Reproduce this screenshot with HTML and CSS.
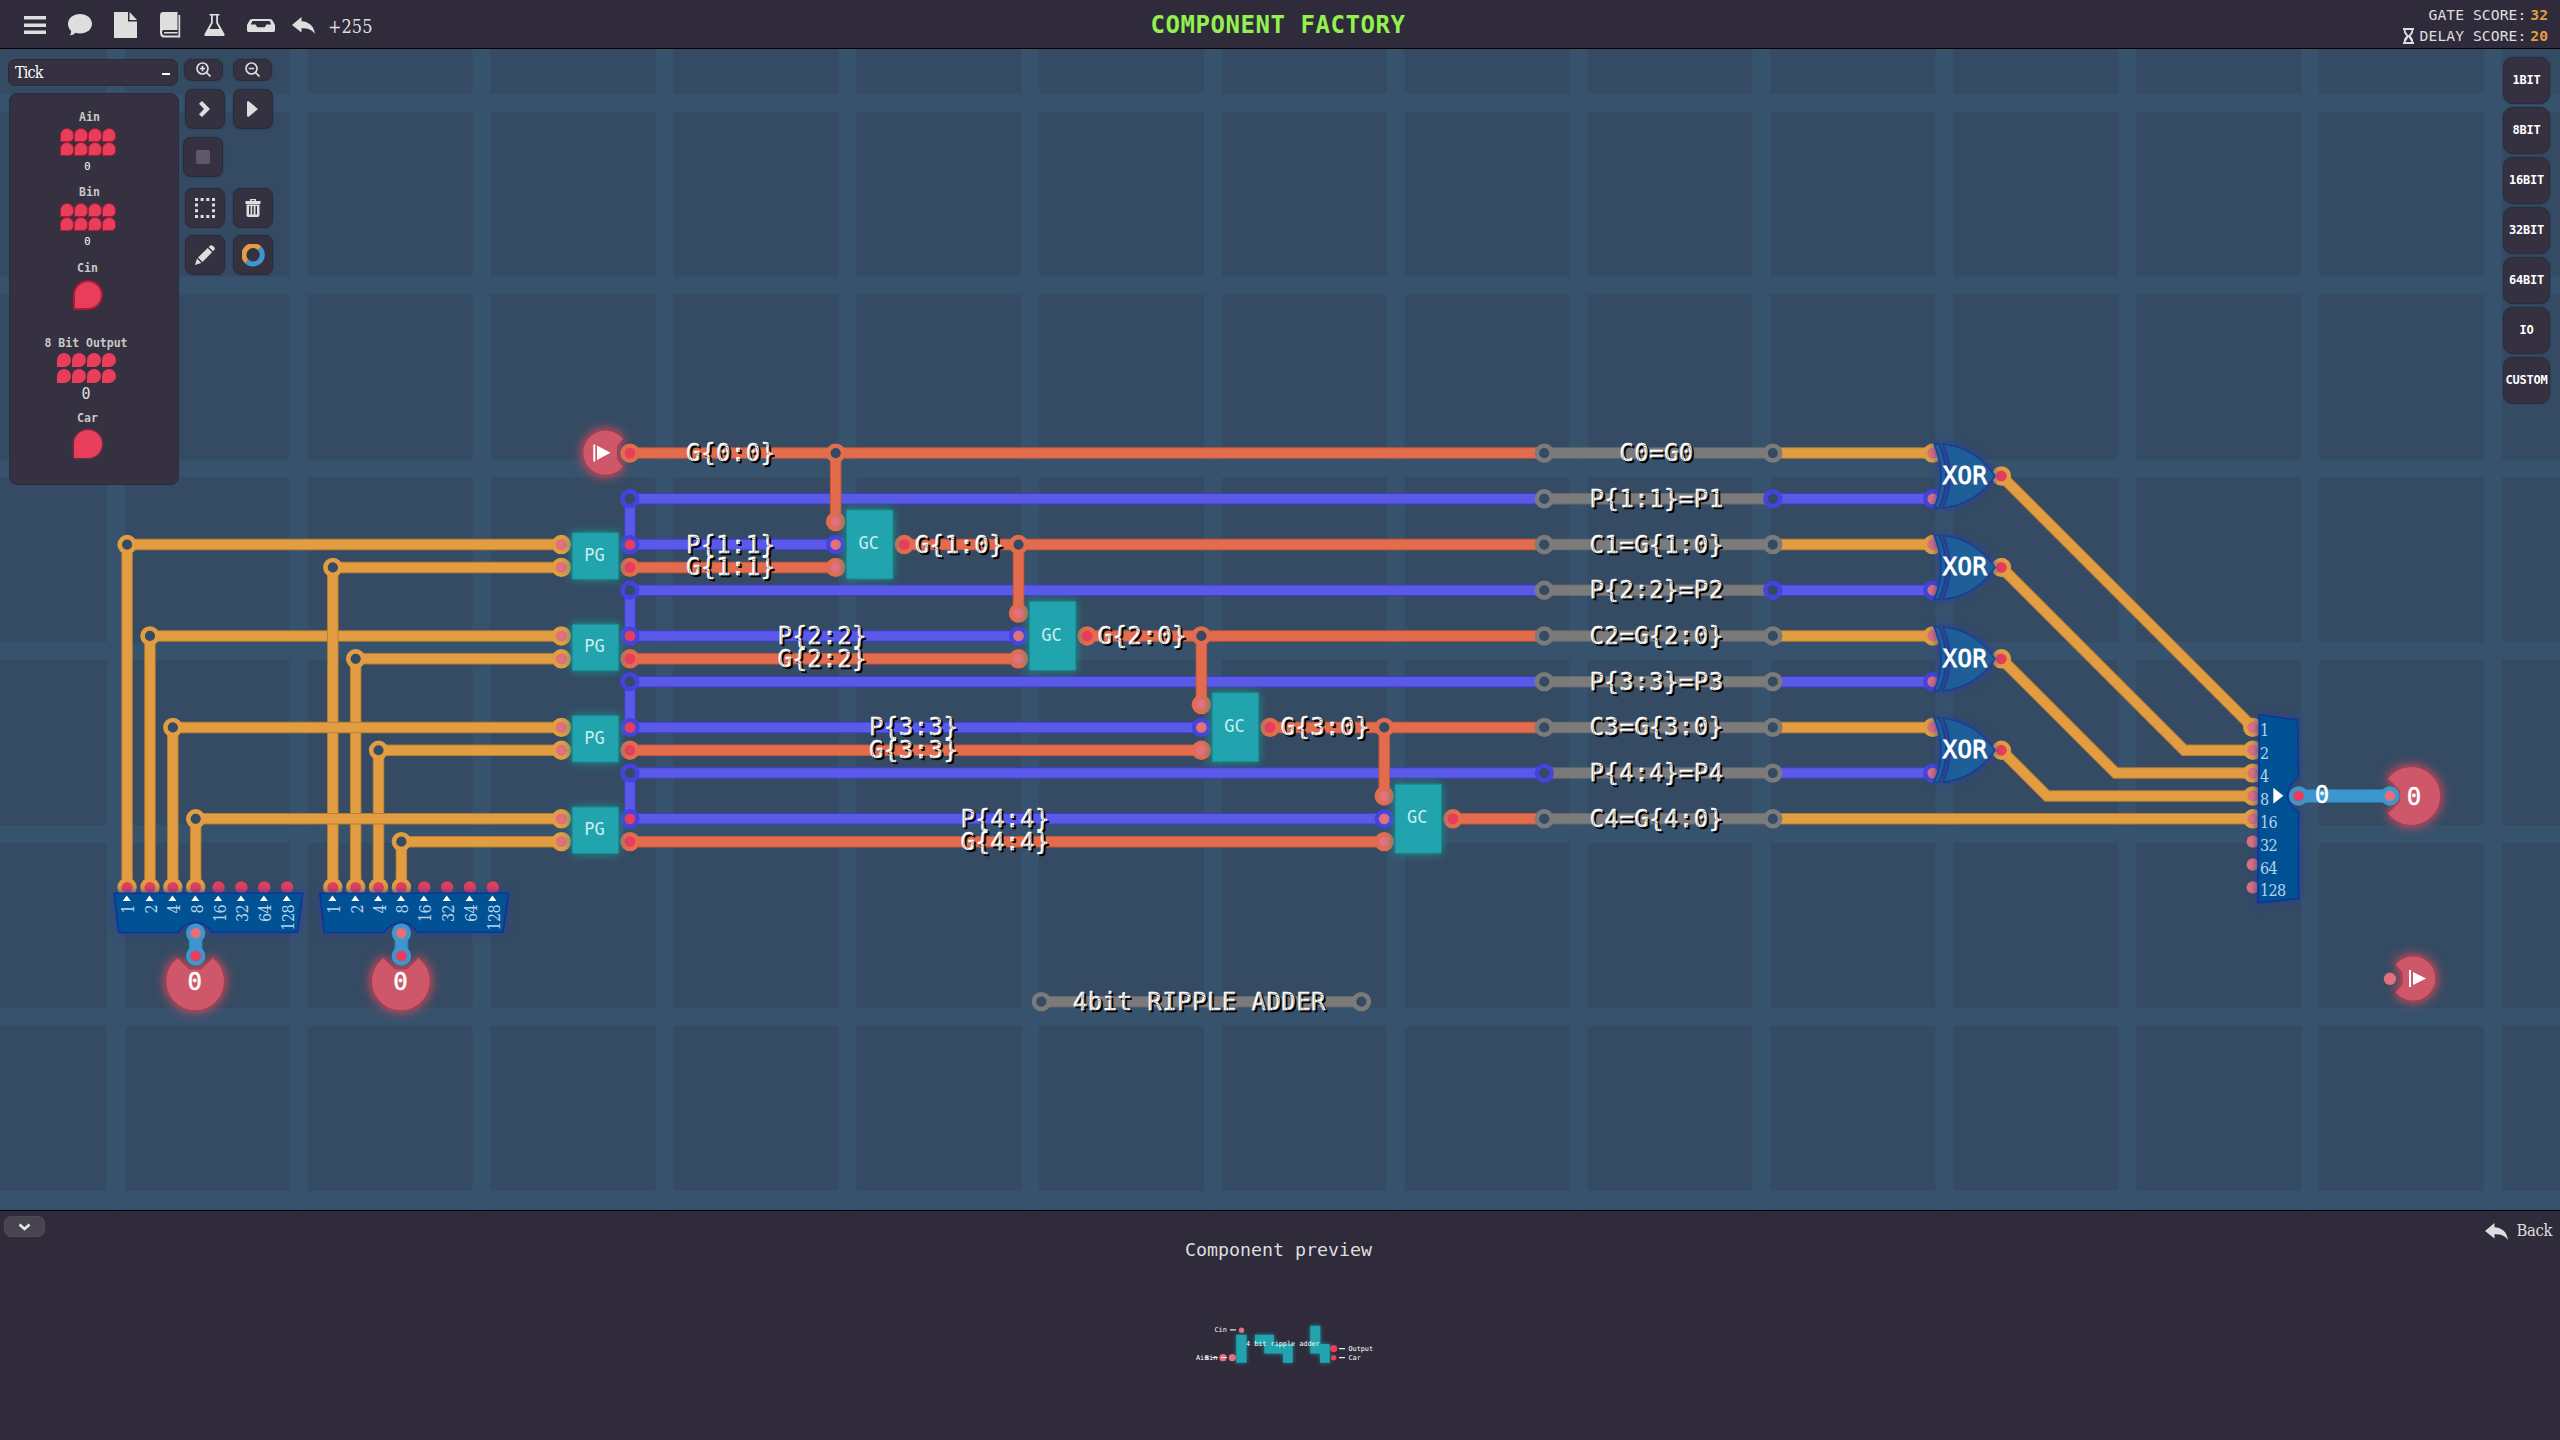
FILE: index.html
```
<!DOCTYPE html>
<html lang="en">
<head>
<meta charset="utf-8">
<title>Component Factory</title>
<link rel="stylesheet" href="styles.css">
</head>
<body>
<header class="topbar">
  <nav class="menu">
    <svg width="22" height="18" viewBox="0 0 22 18"><path d="M0 0h22v3.6H0zM0 7.6h22v3.4H0zM0 14.6h22V18H0z"/></svg>
    <svg width="24" height="22" viewBox="0 0 24 22"><path d="M12 0c6.800 0 12 4.300 12 9.800S19 19.500 12 19.500c-1.800 0-3.200-.2-4.500-.7C6 20.600 3.900 21.400 1.500 21.300 3 20 3.300 18.500 3 16.700 1 15 0 12.600 0 9.800 0 4.300 5.200 0 12 0z"/></svg>
    <svg width="24" height="26" viewBox="0 0 24 26"><path d="M0 0h14v9.500h9V26H0zM15.500 0L23 8h-7.500z"/></svg>
    <svg width="22" height="26" viewBox="0 0 22 26"><path d="M3 0h14.500v18H3.500C2.500 18 2 19 2 20.500s1 3 2.500 3H18.500V3h1.700v22.500H4C1.500 25.500 0 23.500 0 20.500V4c0-2.500 1-4 3-4zM4 20h13.500v1.600H4z"/></svg>
    <svg width="21" height="22" viewBox="0 0 21 22"><path fill-rule="evenodd" d="M5.500 0h10v1.600H14v7L20.500 20c.5 1.500-.3 2-1.500 2H2C.7 22 0 21.500.5 20L7 8.600v-7H5.500zM8.800 1.600v7.500L5.500 15h10l-3.300-5.900V1.600z"/></svg>
    <svg width="28" height="13" viewBox="0 0 26 13" preserveAspectRatio="none"><path fill-rule="evenodd" d="M5 0h16c1.500 0 2.300.7 3 2l2 4v5c0 1.500-.5 2-2 2H2c-1.500 0-2-.5-2-2V6l2-4c.7-1.300 1.500-2 3-2zM5 2L3.500 5.500H8l1.500 2.700h7L18 5.500h4.500L21 2z"/></svg>
    <svg class="undo" width="23" height="17" viewBox="0 0 23 17"><path d="M9.500 0v4.300C17 4.800 22 9 23 17c-3-4.600-7-5.800-13.500-5.800v4.300L0 8z"/></svg>
    <span class="slab budget">+255</span>
  </nav>
  <h1 class="title">COMPONENT FACTORY</h1>
  <div class="scores">
    <div class="score"><span>GATE SCORE:</span><b>32</b></div>
    <div class="score">
      <svg width="11" height="16" viewBox="0 0 11 16"><path fill-rule="evenodd" d="M0 0h11v2h-.8c0 3-1 4.500-2.700 6 1.700 1.500 2.700 3 2.700 6h.8v2H0v-2h.8c0-3 1-4.500 2.700-6C1.800 6.500.8 5 .8 2H0zM2.500 2c.3 2.500 1.500 3.800 3 5.500C7 5.800 8.200 4.500 8.500 2zM5.500 9L2.500 14h6z"/></svg>
      <span>DELAY SCORE:</span><b>20</b>
    </div>
  </div>
</header>

<main class="board">
  <svg id="circuit" class="circuit" viewBox="0 49 2560 1161" width="2560" height="1161">
    <defs>
      <radialGradient id="pinIn"><stop offset="0.5" stop-color="#e6717c"/><stop offset="1" stop-color="#d3727d"/></radialGradient>
    </defs>
  </svg>

  <section class="left-hud">
    <div class="io-column">
      <div class="tick slab"><span>Tick</span><i></i></div>
      <div class="io-panel">
        <div class="io io-byte"><span class="io-name">Ain</span><div class="petals"><i></i><i></i><i></i><i></i><i></i><i></i><i></i><i></i></div><span class="io-value">0</span></div>
        <div class="io io-byte"><span class="io-name">Bin</span><div class="petals"><i></i><i></i><i></i><i></i><i></i><i></i><i></i><i></i></div><span class="io-value">0</span></div>
        <div class="io io-bit"><span class="io-name">Cin</span><i class="petal"></i></div>
        <div class="io io-out"><span class="io-name">8 Bit Output</span><div class="petals flat"><i></i><i></i><i></i><i></i><i></i><i></i><i></i><i></i></div><span class="io-value big">0</span></div>
        <div class="io io-car"><span class="io-name">Car</span><i class="petal soft"></i></div>
      </div>
    </div>
    <div class="tools">
      <div class="tool-row zoom">
        <button class="btn"><svg width="15" height="15" viewBox="0 0 15 15"><g fill="none" stroke="#dedede" stroke-width="1.700"><circle cx="6.500" cy="6.500" r="5.500"/><path d="M10.500 10.500l4 4M3.800 6.500h5.400M6.500 3.800v5.400"/></g></svg></button>
        <button class="btn"><svg width="15" height="15" viewBox="0 0 15 15"><g fill="none" stroke="#dedede" stroke-width="1.700"><circle cx="6.500" cy="6.500" r="5.500"/><path d="M10.500 10.500l4 4M3.800 6.500h5.400"/></g></svg></button>
      </div>
      <div class="tool-row step">
        <button class="btn"><svg width="11" height="16" viewBox="0 0 11 16"><path d="M3 0l8 8-8 8-3-2.700L5 8 0 2.700z"/></svg></button>
        <button class="btn"><svg width="11" height="16" viewBox="0 0 11 16"><path d="M0 1.500C0 .3 1 0 2 .6L11 8l-9 7.400c-1 .6-2 .3-2-.9z"/></svg></button>
      </div>
      <div class="tool-row stop">
        <button class="btn"><svg width="14" height="14" viewBox="0 0 14 14"><rect width="14" height="14" rx="2" fill="#5d5968"/></svg></button>
      </div>
      <div class="tool-row edit">
        <button class="btn"><svg width="20" height="20" viewBox="0 0 20 20"><path d="M0 0h3v3H0zM5.600 0h3v3h-3zM11.300 0h3v3h-3zM17 0h3v3h-3zM0 5.600h3v3H0zM17 5.600h3v3h-3zM0 11.300h3v3H0zM17 11.300h3v3h-3zM0 17h3v3H0zM5.600 17h3v3h-3zM11.300 17h3v3h-3zM17 17h3v3h-3z"/></svg></button>
        <button class="btn"><svg width="16" height="18" viewBox="0 0 16 18"><path fill-rule="evenodd" d="M5 0h6v2h4.500v3H.5V2H5zM6.500 1.200V2h3v-.8zM1.500 5.500h13V16c0 1.300-.7 2-2 2h-9c-1.300 0-2-.7-2-2zM4 7v8.500h1.500V7zM7.200 7v8.500h1.500V7zM10.500 7v8.500H12V7z"/></svg></button>
      </div>
      <div class="tool-row draw">
        <button class="btn"><svg width="20" height="20" viewBox="0 0 20 20"><path d="M15 .8c1-1 2-.8 3 .2l1 1c1 1 1.200 2 .2 3L18 6.300 13.700 2zM12.700 3L17 7.300 7.500 17 3 12.500zM2 13.500L6.300 18 0 20z"/></svg></button>
        <button class="btn"><svg width="23" height="23" viewBox="0 0 23 23"><g fill="none" stroke-width="5"><path stroke="#3f97cf" d="M17.500 4.200A9 9 0 1 1 4.700 17.400"/><path stroke="#e29d43" d="M4.700 17.400A9 9 0 0 1 17.500 4.200"/></g></svg></button>
      </div>
    </div>
  </section>

  <aside class="palette">
    <button class="btn">1BIT</button>
    <button class="btn">8BIT</button>
    <button class="btn">16BIT</button>
    <button class="btn">32BIT</button>
    <button class="btn">64BIT</button>
    <button class="btn">IO</button>
    <button class="btn">CUSTOM</button>
  </aside>
</main>

<footer class="preview">
  <button class="collapse"><svg width="13" height="8" viewBox="0 0 13 8"><path d="M1.500 1.500l5 4.500 5-4.500" fill="none" stroke="#e8e8e8" stroke-width="2.600"/></svg></button>
  <div class="preview-body">
    <h2 class="preview-title">Component preview</h2>
    <svg class="preview-art" width="200" height="60" viewBox="1180 1315 200 60">
      <g class="mini-body">
        <path d="M1236.300 1334.700h10.200v28h-10.200zM1255 1334.700h19v9.300h18.700v18.700H1283v-9.200h-18.700V1344H1255zM1310.300 1325.700h10V1344h9.400v18.700H1320v-9.300h-9.700z"/>
      </g>
      <g class="mini-pin"><circle cx="1241.500" cy="1330.200" r="2.700"/><circle cx="1223" cy="1357.700" r="3.600"/><circle cx="1232.300" cy="1357.700" r="3.600"/></g>
      <g class="mini-out"><circle cx="1333.700" cy="1348.600" r="3.600"/><circle cx="1333.700" cy="1357.800" r="2.700"/></g>
      <path d="M1230 1329.800h6M1212 1357.500h6M1221 1357.500h6M1339 1348.600h6M1339 1357.600h6" stroke="#e8e8e8" stroke-width="1.200"/>
      <g class="mini-text">
        <text x="1214.500" y="1332">Cin</text>
        <text x="1196" y="1359.800">Ain</text>
        <text x="1205" y="1359.800">Bin</text>
        <text x="1246" y="1345.800">4 bit ripple adder</text>
        <text x="1348.500" y="1350.500">Output</text>
        <text x="1348.500" y="1359.700">Car</text>
      </g>
    </svg>
  </div>
  <a class="back slab"><svg width="23" height="17" viewBox="0 0 23 17"><path d="M9.500 0v4.300C17 4.800 22 9 23 17c-3-4.600-7-5.800-13.500-5.800v4.300L0 8z"/></svg>Back</a>
</footer>
<script src="circuit.js"></script>
</body>
</html>
```
FILE: styles.css
```
* { box-sizing: border-box; }

body {
  margin: 0;
  width: 2560px;
  height: 1440px;
  overflow: hidden;
  display: flex;
  flex-direction: column;
  font-family: "DejaVu Sans Mono", monospace;
  color: #dedede;
  background: #2f2b3b;
}

svg { display: block; fill: #dedede; flex: none; }
button { font: inherit; color: inherit; padding: 0; }
.slab { font-family: "DejaVu Serif Condensed", "DejaVu Serif", serif; font-stretch: condensed; }

/* top bar */
.topbar {
  flex: none;
  height: 49px;
  display: grid;
  grid-template-columns: 1fr auto 1fr;
  border-bottom: 1px solid #000;
  background: #2f2b3b;
}
.menu { display: flex; align-items: center; gap: 22px; padding-left: 24px; }
.undo { margin-left: -5px; }
.budget { margin-left: -9px; font-size: 18px; padding-top: 3px; }
.title { position: relative; left: -2px; margin: 0; font-size: 24px; line-height: 50px; font-weight: bold; color: #92f04f; letter-spacing: 0.550px; }
.scores {
  display: flex;
  flex-direction: column;
  align-items: flex-end;
  padding: 5px 12px 0 0;
  font-size: 14.700px;
  line-height: 20.500px;
}
.score { display: flex; align-items: center; }
.score span { letter-spacing: 0.050px; }
.score svg { margin-right: 6px; }
.score b { color: #e29d43; margin-left: 4px; }

/* board */
.board {
  position: relative;
  flex: none;
  height: 1161px;
  background-color: #344b63;
  background-image:
    linear-gradient(90deg, #37526d 18px, transparent 18px),
    linear-gradient(#37526d 18px, transparent 18px);
  background-size: 182.857px 100%, 100% 182.857px;
  background-position: 106.900px 0, 0 44.600px;
}
.circuit { fill: none; }
.wire { stroke-linejoin: miter; }
.label { fill: #fff; stroke: #fff; stroke-width: 0.400; font-size: 24px; letter-spacing: 0.450px; text-anchor: middle; text-shadow: 2px 2px 0 #000; }
.plain { fill: #fff; stroke: #fff; stroke-width: 0.500; font-size: 24px; text-anchor: middle; }
.chip { fill: #22a4ae; stroke: #178d8f; filter: drop-shadow(0 0 5px #1c8f90); }
.chip-name { fill: #c9eef0; font-size: 17px; text-anchor: middle; }
.maker { fill: #005294; stroke: #0c3597; stroke-width: 1.500; filter: drop-shadow(0 0 4px #2b3f9c); }
.gate { fill: #1f5f98; stroke: #143f9a; stroke-width: 1.500; filter: drop-shadow(0 0 4px #2b3f9c); }
.gate-name { fill: #fff; stroke: #fff; stroke-width: 0.900; font-size: 24px; letter-spacing: 0.500px; text-anchor: middle; }
.port { fill: #ce586a; stroke: #a33e50; stroke-width: 1.200; filter: drop-shadow(0 0 6px #ea4a5c); }
.digits { fill: #b5d3ec; font-family: "DejaVu Serif Condensed", "DejaVu Serif", serif; font-stretch: condensed; font-size: 16px; letter-spacing: -0.700px; }
.digits.end { text-anchor: end; }
.white { fill: #fff; }

/* left controls */
.left-hud { position: absolute; left: 8px; top: 10px; display: flex; gap: 5px; }
.io-column { width: 171px; }
.tick {
  width: 170px;
  height: 27px;
  display: flex;
  align-items: center;
  justify-content: space-between;
  padding: 0 7px 0 6px;
  border: 1px solid #282c3c;
  border-radius: 7px;
  background: #353140;
  font-size: 16px;
  letter-spacing: -0.800px;
  color: #fff;
}
.tick i { width: 8px; height: 2px; background: #fff; margin-top: 3px; }
.io-panel {
  width: 170px;
  height: 392px;
  margin: 7px 0 0 1px;
  border: 1px solid #282c3c;
  border-radius: 8px;
  background: #353140;
  padding-top: 16px;
}
.io { width: 155px; display: flex; flex-direction: column; align-items: center; font-size: 11.500px; line-height: 12px; }
.io-byte { height: 75px; }
.io-bit { height: 76px; padding-top: 1px; }
.io-out { height: 75px; width: 152px; }
.io-name { position: relative; top: 1px; font-weight: bold; color: #c9c9c9; }
.io-byte .io-name { left: 2px; }
.io-value { color: #fff; line-height: 14px; margin-top: -2px; font-size: 10.500px; }
.io-value.big { font-size: 15px; margin-top: 4px; line-height: 15px; color: #dedede; }
.petals { display: grid; grid-template-columns: repeat(4, 14px); grid-auto-rows: 14px; margin: 6px 0; }
.io-byte .petals { margin-bottom: 5px; }
.petals i, .petal { background: #e83e5b; border: 2px solid #a91c35; border-radius: 50% 50% 50% 0; }
.io-byte .petals i { border-width: 1.500px; border-radius: 50% 50% 35% 0; }
.petals.flat { grid-template-columns: repeat(4, 14px); grid-auto-rows: 14px; gap: 2px 1px; margin: 5px 0 0; }
.petals.flat i { border: 0; }
.petal { width: 30px; height: 30px; margin-top: 7px; }
.petal.soft { width: 28px; height: 28px; border: 0; box-shadow: 0 0 3px #c8304a; }
.tools { display: flex; flex-direction: column; padding-left: 1px; }
.tool-row { display: flex; gap: 8px; }
.btn {
  width: 40px;
  height: 40px;
  display: flex;
  align-items: center;
  justify-content: center;
  border: 1px solid #282c3c;
  border-radius: 8px;
  background: #353140;
  box-shadow: 0 0 2px #2b3648;
}
.zoom { gap: 10px; margin: 0 0 8px -1px; }
.zoom .btn { width: 39px; height: 22px; padding-bottom: 2px; }
.step { margin-bottom: 8px; }
.step svg { margin: 0 1px 1px 0; }
.stop { margin: 0 0 11px -2px; }
.stop svg { margin-bottom: 1px; }
.edit { margin-bottom: 7px; }

/* component palette */
.palette { position: absolute; right: 10px; top: 8px; display: flex; flex-direction: column; gap: 3px; }
.palette .btn { width: 47px; height: 47px; padding-bottom: 2px; border-radius: 10px; font-size: 12px; font-weight: bold; color: #fff; letter-spacing: -0.250px; }

/* bottom panel */
.preview {
  flex: 1;
  display: grid;
  grid-template-columns: 1fr auto 1fr;
  border-top: 1px solid #000;
  background: #2f2b3b;
}
.collapse {
  width: 41px;
  height: 21px;
  margin: 5px 0 0 4px;
  display: flex;
  align-items: center;
  justify-content: center;
  border: 1px solid #4e4a59;
  border-radius: 7px;
  background: #47434f;
}
.preview-body { display: flex; flex-direction: column; align-items: center; padding-top: 26px; }
.preview-title { position: relative; left: -1.500px; margin: 0; font-size: 18.300px; font-weight: normal; line-height: 26px; color: #dedede; }
.preview-art { margin-top: 52px; }
.back { justify-self: end; display: flex; align-items: flex-start; gap: 9px; margin: 10px 8px 0 0; font-size: 16.500px; line-height: 20px; letter-spacing: -0.400px; }
.back svg { margin-top: 2px; }
.mini-body { fill: #22a4ae; filter: drop-shadow(0 0 2px #178d9a); }
.mini-pin { fill: #e6717c; }
.mini-out { fill: #e83e5b; }
.mini-text { fill: #fff; font-size: 6.800px; }
```
FILE: circuit.js
```
// Circuit geometry is expressed in grid cells; one cell is 1/8 of a board tile.
const CELL = 182.857 / 8;
const X = (c) => 127.1 + c * CELL;
const Y = (r) => 453.1 + r * CELL;
const svg = document.getElementById('circuit');

const COLORS = {
  orange: ['#e29d43', '#b97f2f', '#e29d43'],
  red: ['#e26c4d', '#cb5737', '#e26c4d'],
  blue: ['#5b5ae8', '#403ecb', '#4543e0'],
  grey: ['#7b7b7b', '#6b6b6b', '#7b7b7b'],
  sky: ['#3c97cf', '#2b74a3', '#3c97cf'],
};

function add(tag, attrs, text) {
  const el = document.createElementNS('http://www.w3.org/2000/svg', tag);
  for (const key in attrs) el.setAttribute(key, attrs[key]);
  if (text !== undefined) el.textContent = text;
  svg.appendChild(el);
  return el;
}

function wire(color, cells, width = 11.5) {
  const points = cells.map(([c, r]) => `${X(c)},${Y(r)}`).join(' ');
  add('polyline', { class: 'wire', points, stroke: COLORS[color][1], 'stroke-width': width });
  add('polyline', { class: 'wire', points, stroke: COLORS[color][0], 'stroke-width': width - 2 });
}

function ring(color, c, r, fill = '#344b63') {
  add('circle', { cx: X(c), cy: Y(r), r: 7.4, fill, stroke: COLORS[color][2], 'stroke-width': 4.6 });
}

function pin(c, r, kind, color) {
  if (color) add('circle', { cx: X(c), cy: Y(r), r: 9.7, fill: COLORS[color][2] });
  add('circle', { cx: X(c), cy: Y(r), r: color ? 5.4 : 6.2, fill: kind === 'in' ? 'url(#pinIn)' : '#e83e5b' });
}

const text = (cls, x, y, value) => add('text', { class: cls, x, y }, value);
const label = (c, r, value) => text('label', X(c) - 2, Y(r) + 8, value);
const port = (d) => add('path', { class: 'port', d });

// Operand wires feeding the PG blocks
[[0, 4], [1, 8], [9, 5], [10, 9], [2, 12], [11, 13], [3, 16], [12, 17]].forEach(([c, r]) => {
  wire('orange', [[c, 19], [c, r]]);
  wire('orange', [[c, r], [19, r]]);
  ring('orange', c, r);
});

// Propagate lines
[2, 6, 10, 14].forEach((r, i) => {
  wire('blue', [[22, r], [62, r]]);
  wire('blue', [[22, r], [22, r + 2]]);
  wire('blue', [[22, r + 2], [31 + 8 * i, r + 2]]);
  ring('blue', 22, r);
});

// Generate and carry lines
wire('red', [[22, 0], [62, 0]]);
[0, 1, 2, 3].forEach((i) => {
  const c = 31 + 8 * i;
  const r = 4 * i;
  wire('red', [[22, r + 5], [c, r + 5]]);
  wire('red', [[c + 3, r + 4], [62, r + 4]]);
  wire('red', [[c, r], [c, r + 3]]);
  ring('red', c, r);
});

// Named buses between column 62 and 72
const names = ['C0=G0', 'P{1:1}=P1', 'C1=G{1:0}', 'P{2:2}=P2', 'C2=G{2:0}', 'P{3:3}=P3', 'C3=G{3:0}', 'P{4:4}=P4', 'C4=G{4:0}'];
names.forEach((name, i) => {
  const r = 2 * i;
  const isP = i % 2 === 1;
  wire('grey', [[62, r], [72, r]]);
  wire(isP ? 'blue' : 'orange', [[72, r], [i === 8 ? 93 : 79, r]]);
  ring(i === 7 ? 'blue' : 'grey', 62, r);
  ring(i === 1 || i === 3 ? 'blue' : 'grey', 72, r);
  label(67, r, name);
});

// Sum wires
wire('orange', [[82, 1], [93, 12]]);
wire('orange', [[82, 5], [90, 13], [93, 13]]);
wire('orange', [[82, 9], [87, 14], [93, 14]]);
wire('orange', [[82, 13], [84, 15], [93, 15]]);
wire('sky', [[95, 15], [99, 15]], 14);

wire('grey', [[40, 24], [54, 24]]);
ring('grey', 40, 24);
ring('grey', 54, 24);
label(47, 24, '4bit RIPPLE ADDER');

// PG and GC blocks
[0, 1, 2, 3].forEach((i) => {
  const r = 4 * i + 4;
  const c = 31 + 8 * i;
  pin(19, r, 'in', 'orange');
  pin(19, r + 1, 'in', 'orange');
  pin(22, r, 'out', 'blue');
  pin(22, r + 1, 'out', 'red');
  pin(c, r - 1, 'in', 'red');
  pin(c, r, 'in', 'blue');
  pin(c, r + 1, 'in', 'red');
  pin(c + 3, r, 'out', 'red');
  add('rect', { class: 'chip', x: X(20.5) - 23.5, y: Y(r + 0.5) - 23.2, width: 46.5, height: 46.5, rx: 1 });
  text('chip-name', X(20.5) - 1.2, Y(r + 0.5) + 4.8, 'PG');
  add('rect', { class: 'chip', x: X(c + 1.5) - 23.5, y: Y(r) - 34.6, width: 46.5, height: 69, rx: 1 });
  text('chip-name', X(c + 1.5) - 1.2, Y(r) + 4.6, 'GC');
});

// XOR gates
[0, 4, 8, 12].forEach((r) => {
  pin(79, r, 'in', 'orange');
  pin(79, r + 2, 'in', 'blue');
  pin(82, r + 1, 'out', 'orange');
  const y = Y(r + 1);
  add('path', { class: 'gate', d: `M1943 ${y - 32} Q1957 ${y} 1943 ${y + 32} Q1976 ${y + 28} 1995 ${y} Q1976 ${y - 28} 1943 ${y - 32}Z` });
  add('path', { class: 'gate', d: `M1934 ${y - 32} h5 Q1953 ${y} 1939 ${y + 32} h-5 Q1948 ${y} 1934 ${y - 32}Z` });
  text('gate-name', 1965, y + 8, 'XOR');
});

// Operand ports and byte splitters
[0, 9].forEach((base) => {
  const dx = X(base) - X(0);
  const cx = X(base + 3);
  for (let i = 0; i < 8; i++) pin(base + i, 19, 'out', i < 4 ? 'orange' : null);
  add('path', {
    class: 'maker', transform: `translate(${dx} 0)`,
    d: 'M114 893.300H302.700L297.500 932.300H211.700Q206 923 195.700 922Q185 923 178 932.600H118.700Z',
  });
  for (let i = 0; i < 8; i++) {
    const x = X(base + i) - 0.4;
    add('path', { class: 'white', d: `M${x - 4} 901 L${x} 895.500 L${x + 4} 901Z` });
    const num = text('digits end', 0, 0, String(2 ** i));
    num.setAttribute('transform', `translate(${x + 7.4} 905) rotate(-90)`);
  }
  port(`M${cx - 18} 957.500L${cx - 6} 969H${cx + 5}L${cx + 17} 957.500A29.500 29.500 0 1 1 ${cx - 18} 957.500Z`);
  wire('sky', [[base + 3, 21], [base + 3, 22]], 14);
  pin(base + 3, 21, 'in', 'sky');
  pin(base + 3, 22, 'out', 'sky');
  text('plain', cx - 1, 989.5, '0');
});

// Carry-in port
port('M623.500 466.500L617.500 459V446.500L623.500 439A22.700 22.700 0 1 0 623.500 466.500Z');
pin(22, 0, 'out', 'red');
add('path', { class: 'white', d: 'M593.300 444.500h2v17h-2zM597 445.500L610.500 452.800L597 460z' });

// Byte maker
for (let r = 12; r < 20; r++) pin(93, r, 'in', r < 17 ? 'orange' : null);
add('path', { class: 'maker', d: 'M2259.300 714.700L2297.500 720L2298.300 777Q2288.500 784 2287.500 796Q2288.500 806 2298.500 812V898.500L2257.800 902.800Z' });
for (let i = 0; i < 8; i++) text('digits', 2260, Y(12 + i) + 9, String(2 ** i));
add('path', { class: 'white', d: 'M2273.300 787.700L2283.300 795.700L2273.300 803.700Z' });
pin(95, 15, 'out', 'sky');
text('plain', 2322, 803, '0');

// Sum output and carry-out ports
port('M2387.500 778.500L2399.500 791V801L2387.500 813.500A29.500 29.500 0 1 0 2387.500 778.500Z');
pin(99, 15, 'in', 'sky');
text('plain', 2414, 804.5, '0');
port('M2395.300 964.500L2402 973V984L2395.300 992.500A22.700 22.700 0 1 0 2395.300 964.500Z');
pin(99, 23, 'in', null);
add('path', { class: 'white', d: 'M2409 970h2v17h-2zM2413 972L2426 978.500L2413 985z' });

// Line names
label(26.5, 0, 'G{0:0}');
[1, 2, 3, 4].forEach((n) => {
  label(22.5 + 4 * n, 4 * n, `P{${n}:${n}}`);
  label(22.5 + 4 * n, 4 * n + 1, `G{${n}:${n}}`);
  if (n < 4) label(28.5 + 8 * n, 4 * n, `G{${n}:0}`);
});
```
